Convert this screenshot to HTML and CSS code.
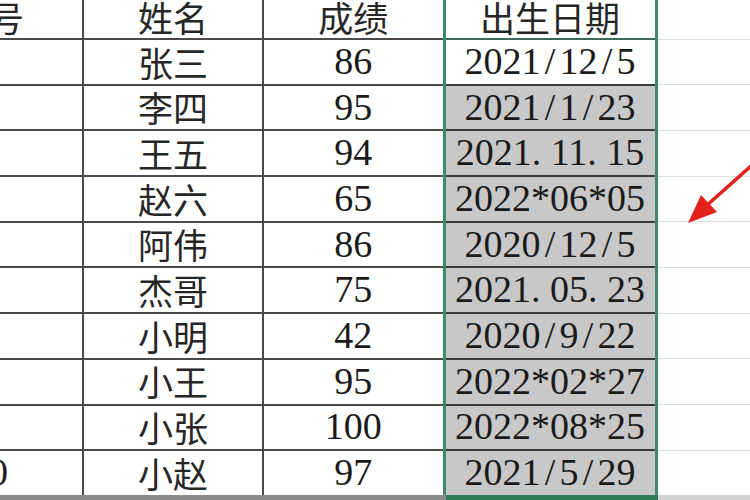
FILE: index.html
```html
<!DOCTYPE html>
<html lang="zh">
<head>
<meta charset="utf-8">
<link rel="stylesheet" href="styles.css">
</head>
<body>
<div class="sheet">
<table class="grid">
  <colgroup>
    <col class="w-a"><col class="w-b"><col class="w-c"><col class="w-d"><col class="w-e">
  </colgroup>
  <tr class="head">
    <td class="a cjk">序号</td><td class="b cjk">姓名</td><td class="c cjk">成绩</td><td class="d cjk">出生日期</td><td class="e"></td>
  </tr>
  <tr><td class="a num">1</td><td class="b cjk">张三</td><td class="c num">86</td><td class="d num first">2021<span class="p">/</span>12<span class="p">/</span>5</td><td class="e"></td></tr>
  <tr><td class="a num">2</td><td class="b cjk">李四</td><td class="c num">95</td><td class="d num">2021<span class="p">/</span>1<span class="p">/</span>23</td><td class="e"></td></tr>
  <tr><td class="a num">3</td><td class="b cjk">王五</td><td class="c num">94</td><td class="d num">2021<span class="dot">.</span>11<span class="dot">.</span>15</td><td class="e"></td></tr>
  <tr><td class="a num">4</td><td class="b cjk">赵六</td><td class="c num">65</td><td class="d num">2022*06*05</td><td class="e"></td></tr>
  <tr><td class="a num">5</td><td class="b cjk">阿伟</td><td class="c num">86</td><td class="d num">2020<span class="p">/</span>12<span class="p">/</span>5</td><td class="e"></td></tr>
  <tr><td class="a num">6</td><td class="b cjk">杰哥</td><td class="c num">75</td><td class="d num">2021<span class="dot">.</span>05<span class="dot">.</span>23</td><td class="e"></td></tr>
  <tr><td class="a num">7</td><td class="b cjk">小明</td><td class="c num">42</td><td class="d num">2020<span class="p">/</span>9<span class="p">/</span>22</td><td class="e"></td></tr>
  <tr><td class="a num">8</td><td class="b cjk">小王</td><td class="c num">95</td><td class="d num">2022*02*27</td><td class="e"></td></tr>
  <tr><td class="a num">9</td><td class="b cjk">小张</td><td class="c num">100</td><td class="d num">2022*08*25</td><td class="e"></td></tr>
  <tr class="last"><td class="a num">10</td><td class="b cjk">小赵</td><td class="c num">97</td><td class="d num">2021<span class="p">/</span>5<span class="p">/</span>29</td><td class="e"></td></tr>
</table>
<svg class="arrow" width="750" height="500" viewBox="0 0 750 500">
  <line x1="760" y1="158" x2="705" y2="207" stroke="#e3201c" stroke-width="3.5" stroke-linecap="round"/>
  <polygon points="688,223 701,195 717,212" fill="#e3201c"/>
</svg>
</div>
</body>
</html>
```
FILE: styles.css
```css
html, body {
  margin: 0;
  padding: 0;
  background: #ffffff;
  overflow: hidden;
}
.sheet {
  width: 750px;
  height: 500px;
  overflow: hidden;
  position: relative;
}
.grid {
  border-collapse: collapse;
  table-layout: fixed;
  margin: -3px 0 0 -106px;
  width: 901px;
  color: #1e1e1e;
}
.w-a { width: 188px; }
.w-b { width: 180px; }
.w-c { width: 181px; }
.w-d { width: 212px; }
.w-e { width: 140px; }
.grid td {
  padding: 0;
  height: 43.7px;
  text-align: center;
  vertical-align: middle;
  white-space: nowrap;
  overflow: hidden;
  line-height: 1.1;
}
.grid tr.head td { height: 41px; }
.cjk {
  font-family: "Noto Sans CJK SC", sans-serif;
  font-size: 35px;
  font-weight: 400;
  color: #262626;
}
.num {
  font-family: "Liberation Serif", "Times New Roman", serif;
  font-size: 38px;
  color: #1a1a1a;
}
.a, .b, .c {
  border: 2px solid #4a4a4a;
}
.head .a, .head .b, .head .c { border-top: none; }
.d {
  border-left: 3px solid #3f8a68;
  border-right: 3px solid #3f8a68;
  border-top: 2px solid #3a3a3a;
  border-bottom: 2px solid #3a3a3a;
  background: #c8c8c8;
}
.head .d {
  background: #ffffff;
  border-top: none;
  border-bottom: 2px solid #3d6a58;
}
.d.first { background: #ffffff; }
.e {
  border-top: 1px solid #dedede;
  border-bottom: 1px solid #dedede;
  border-right: none;
}
.head .e { border-top: none; }
.last .a, .last .b, .last .c {
  border-bottom: 7px solid #8a8a8a;
}
.last .d {
  border-bottom: 7px solid #2f7a58;
}
.last .e {
  border-bottom: 7px solid #d4d4d4;
}
.p {
  display: inline-block;
  width: 0.5em;
  text-align: center;
}
.dot {
  display: inline-block;
  width: 0.5em;
  text-align: left;
}
.arrow {
  position: absolute;
  left: 0;
  top: 0;
  pointer-events: none;
}
```
